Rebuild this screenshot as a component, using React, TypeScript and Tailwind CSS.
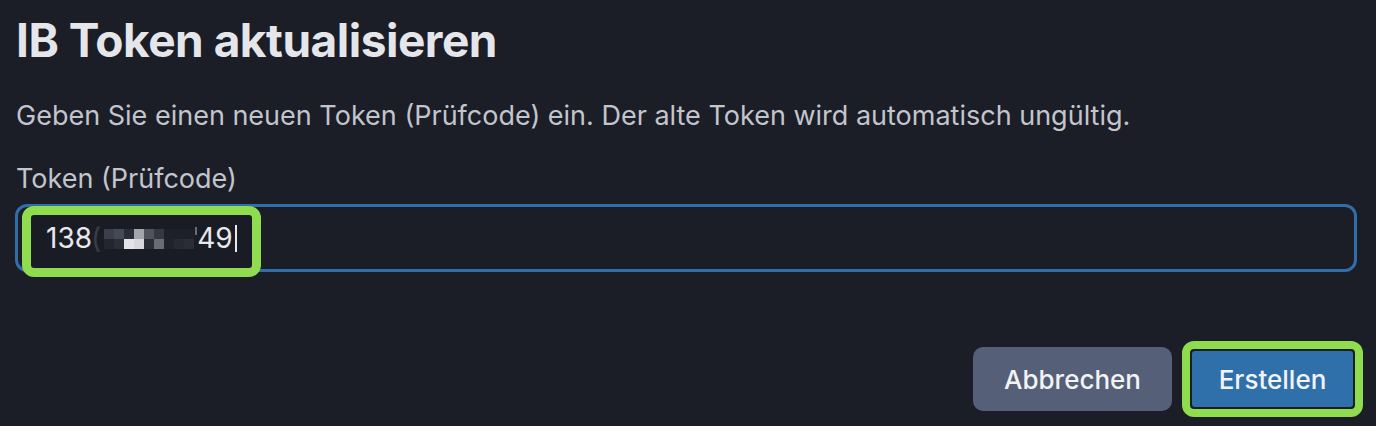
import React from "react";

const cellsRow1 = ["#3c3f4a", "#464956", "#2a2d37", "#a3a5ac", "#50525c", "#353743", "#1d1f29", "#1d1f29", "#1d1f29"];
const cellsRow2 = ["#23252f", "#2b2d37", "#e4e4e8", "#d8d8dc", "#2a2c36", "#6a6c75", "#1f212b", "#262833", "#2a2c36"];

function Mosaic() {
  return (
    <span className="inline-flex flex-col self-start mt-[2px]">
      <span className="flex">
        {cellsRow1.map((c, i) => (
          <span key={i} className="block w-[10px] h-[10px]" style={{ backgroundColor: c }} />
        ))}
      </span>
      <span className="flex">
        {cellsRow2.map((c, i) => (
          <span key={i} className="block w-[10px] h-[10px]" style={{ backgroundColor: c }} />
        ))}
      </span>
    </span>
  );
}

export default function App() {
  return (
    <div className="w-[1376px] h-[426px] bg-[#1b1d27] font-['Inter','Liberation_Sans',sans-serif] flex flex-col px-4 overflow-hidden">
      <h1 className="mt-[15px] text-[46px] leading-[50px] font-bold text-[#e5e6ea] tracking-[-0.5px]">
        IB Token aktualisieren
      </h1>
      <p className="mt-[32px] text-[27px] leading-[38px] text-[#c2c5cc]">
        Geben Sie einen neuen Token (Prüfcode) ein. Der alte Token wird automatisch ungültig.
      </p>
      <label className="mt-[27px] text-[27px] leading-[34px] text-[#c2c5cc]">Token (Prüfcode)</label>
      <div className="relative mt-[8px] h-[68px] w-[1342px] -ml-px rounded-[12px] border-[3px] border-[#2f6ea9] flex items-center">
        <div className="absolute left-[4px] top-[-1px] w-[239px] h-[71px] rounded-[12px] border-[9px] border-[#8fdc4e] bg-[#1a1c25]" />
        <div className="relative ml-[28px] flex items-center text-[28px] text-[#e8e9ec] leading-[30px]">
          <span>138</span>
          <span className="text-[#3a3d48] -ml-[1px]">(</span>
          <span className="ml-[3px] flex"><Mosaic /></span>
          <span className="block self-start mt-[4px] ml-[1px] w-[2px] h-[8px] bg-[#6a6c75]" />
          <span>49</span>
          <span className="ml-[2px] w-[2px] h-[27px] bg-[#e8e9ec]" />
        </div>
      </div>
      <div className="mt-auto mb-[9px] flex justify-end items-center gap-[10px] -mr-[3px]">
        <button className="w-[199px] h-[64px] rounded-[10px] bg-[#565f78] text-[26px] font-medium text-[#f2f3f5]">
          Abbrechen
        </button>
        <div className="rounded-[12px] border-[8px] border-[#8fdc4e] bg-[#1b1d27] p-[2px]">
          <button className="w-[161px] h-[56px] rounded-[3px] bg-[#3070aa] text-[26px] font-medium text-[#f2f3f5]">
            Erstellen
          </button>
        </div>
      </div>
    </div>
  );
}
